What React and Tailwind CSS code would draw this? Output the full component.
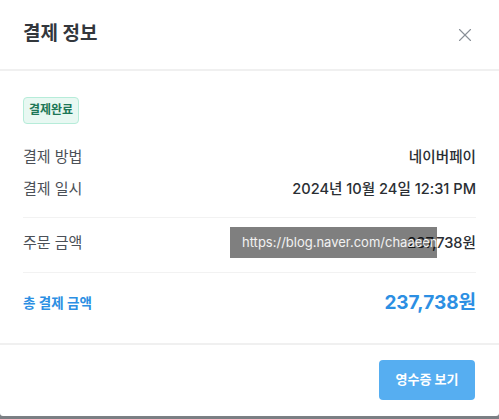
import { X } from 'lucide-react';

const font = { fontFamily: 'Inter, "Noto Sans CJK KR", sans-serif' };

function InfoRow({ label, value }) {
  return (
    <div className="flex h-5 items-center justify-between leading-5">
      <span className="text-[15px] text-[#4b5057]">{label}</span>
      <span className="text-[14.6px] font-medium text-[#2a2e33]">{value}</span>
    </div>
  );
}

function PaymentInfo() {
  return (
    <div className="h-[419px] w-[499px] bg-[#7b7f84]" style={font}>
      <div className="relative h-[416px] w-full rounded-b-[3px] bg-white">
        <div className="flex h-[71px] items-center justify-between border-b-2 border-[#f0f0f0] px-[23px]">
          <h2 className="text-[19px] font-bold text-[#33373c]">결제 정보</h2>
          <button type="button" aria-label="Close" className="text-[#8a9098]">
            <X size={22} strokeWidth={1.25} />
          </button>
        </div>

        <div className="px-[23px] pt-[25px]">
          <span className="inline-flex h-[27px] items-center rounded-[4px] border border-[#b6ecd9] bg-[#e8f8f2] px-[5px] text-[12px] font-bold text-[#1d7757]">
            결제완료
          </span>

          <div className="mt-[23px] space-y-3">
            <InfoRow label="결제 방법" value="네이버페이" />
            <InfoRow label="결제 일시" value="2024년 10월 24일 12:31 PM" />
          </div>

          <div className="mt-[18px] border-t border-[#f2f2f2]" />

          <div className="pb-[19px] pt-[15px]">
            <InfoRow label="주문 금액" value="237,738원" />
          </div>

          <div className="border-t border-[#f2f2f2]" />

          <div className="flex h-[70px] items-center justify-between pb-[8px]">
            <span className="text-[13.5px] font-semibold text-[#2c8fe3]">총 결제 금액</span>
            <span className="text-[19px] font-bold text-[#2c8fe3]">237,738원</span>
          </div>
        </div>

        <div className="flex justify-end border-t-2 border-[#f0f0f0] px-[24px] pt-[15px]">
          <button
            type="button"
            className="h-10 w-[96px] rounded-[4px] bg-[#56aef1] text-[13px] font-bold text-white"
          >
            영수증 보기
          </button>
        </div>

        <div className="absolute left-[230px] top-[227px] flex h-[31px] w-[207px] items-center overflow-hidden whitespace-nowrap bg-black/50 pl-[12px] text-[13px] text-white/90">
          https://blog.naver.com/chaaeenn~
        </div>
      </div>
    </div>
  );
}

export default function App() {
  return <PaymentInfo />;
}
